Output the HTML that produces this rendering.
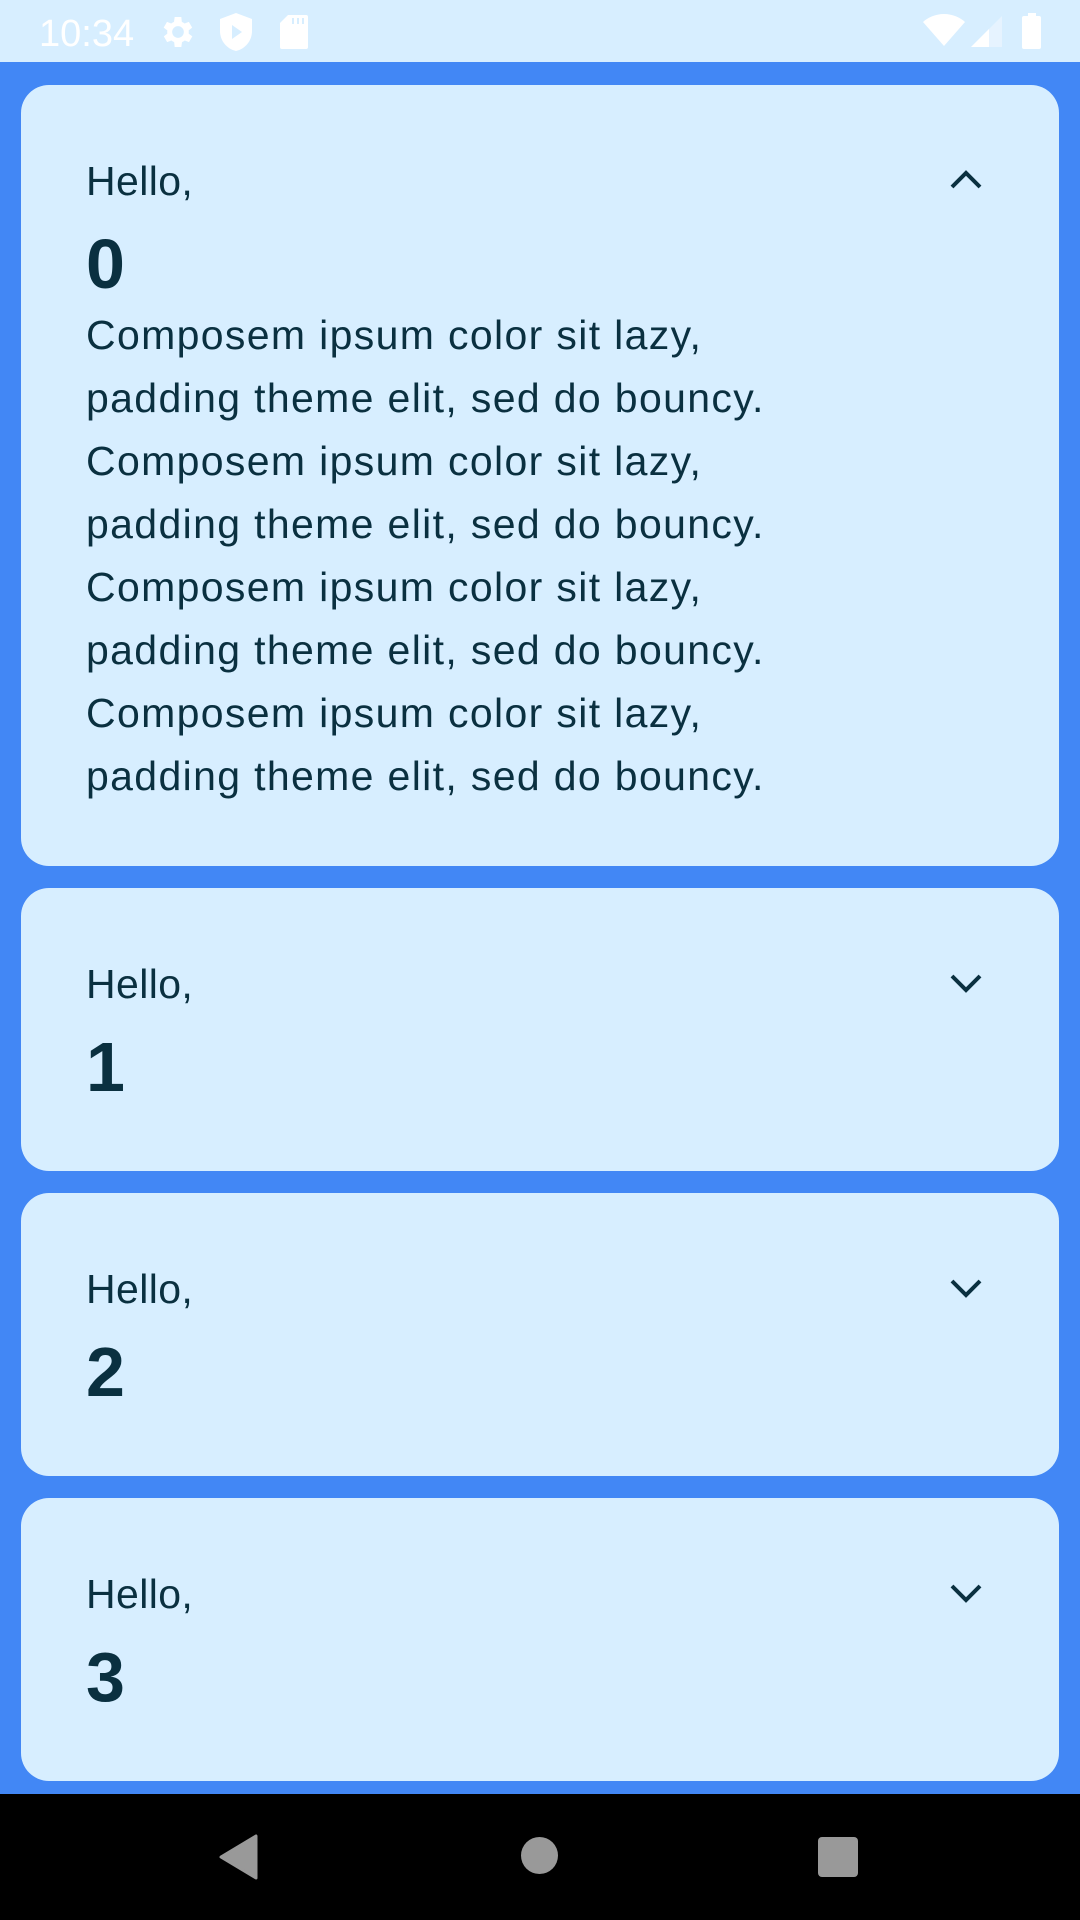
<!DOCTYPE html>
<html><head><meta charset="utf-8"><style>
*{margin:0;padding:0;box-sizing:border-box}
body{width:1080px;height:1920px;background:#4287f5;position:relative;overflow:hidden;font-family:"Liberation Sans",sans-serif;color:#0a3040}
.sb{position:absolute;left:0;top:0;width:1080px;height:62px;background:#d7eeff}
.card{position:absolute;left:21px;width:1038px;background:#d7eeff;border-radius:28px}
.t{position:absolute;left:65px;white-space:nowrap}
.h{font-size:41px;line-height:1;letter-spacing:0.4px}
.d{font-size:70px;font-weight:bold;line-height:1}
.b{font-size:41px;line-height:63px;letter-spacing:1.35px}
.chev{position:absolute;left:929px;width:32px;height:22px}
.nav{position:absolute;left:0;top:1794px;width:1080px;height:126px;background:#000}
</style></head><body>
<div class="sb">
<div style="position:absolute;left:39px;top:13px;font-size:38px;color:#fff">10:34</div>
<svg style="position:absolute;left:158px;top:12px" width="40" height="40" viewBox="0 0 24 24"><path fill="#fff" d="M19.4 13a7.5 7.5 0 0 0 0-2l2.1-1.6-2-3.5-2.5 1a7 7 0 0 0-1.7-1L15 3h-4l-.4 2.9a7 7 0 0 0-1.7 1l-2.5-1-2 3.5L6.6 11a7.5 7.5 0 0 0 0 2l-2.1 1.6 2 3.5 2.5-1a7 7 0 0 0 1.7 1L11 21h4l.4-2.9a7 7 0 0 0 1.7-1l2.5 1 2-3.5zM13 15.5a3.5 3.5 0 1 1 0-7 3.5 3.5 0 0 1 0 7z" transform="translate(-1 0)"/></svg>
<svg style="position:absolute;left:220px;top:13px" width="32" height="38" viewBox="0 0 16 19"><path fill="#fff" d="M8 0L0 3v6c0 5 3.5 9 8 10 4.5-1 8-5 8-10V3z"/><path fill="#d7eeff" d="M6 6v7l5-3.5z"/></svg>
<svg style="position:absolute;left:280px;top:15px" width="28" height="34" viewBox="0 0 14 17"><path fill="#fff" d="M4 0h9a1 1 0 0 1 1 1v15a1 1 0 0 1-1 1H1a1 1 0 0 1-1-1V4z"/><path fill="#d7eeff" d="M6 1.5h1v3H6zM8.5 1.5h1v3h-1zM11 1.5h1v3h-1z"/></svg>
<svg style="position:absolute;left:922px;top:14px" width="44" height="32" viewBox="0 0 44 32"><path fill="#fff" d="M22 0C13 0 5 4 1 8l21 24L43 8C39 4 31 0 22 0z"/></svg>
<svg style="position:absolute;left:970px;top:16px" width="34" height="32" viewBox="0 0 34 32"><path fill="#e6f3ff" d="M32 0v31H1z"/><path fill="#fff" d="M19 13v18H1z"/></svg>
<svg style="position:absolute;left:1021px;top:13px" width="22" height="36" viewBox="0 0 22 36"><rect x="7" y="0" width="8" height="5" fill="#fff"/><rect x="1" y="3" width="19" height="33" rx="2" fill="#fff"/></svg>
</div>

<div class="card" style="top:85px;height:781px">
<div class="t h" style="top:76px">Hello,</div>
<div class="t d" style="top:144px">0</div>
<div class="t b" style="top:219px">Composem ipsum color sit lazy,<br>padding theme elit, sed do bouncy.<br>Composem ipsum color sit lazy,<br>padding theme elit, sed do bouncy.<br>Composem ipsum color sit lazy,<br>padding theme elit, sed do bouncy.<br>Composem ipsum color sit lazy,<br>padding theme elit, sed do bouncy.</div>
<svg class="chev" style="top:84px" viewBox="0 0 32 22"><path d="M2 18L16 4l14 14" fill="none" stroke="#0a3040" stroke-width="4"/></svg>
</div>

<div class="card" style="top:888px;height:283px">
<div class="t h" style="top:76px">Hello,</div>
<div class="t d" style="top:144px">1</div>
<svg class="chev" style="top:84px" viewBox="0 0 32 22"><path d="M2 4l14 14L30 4" fill="none" stroke="#0a3040" stroke-width="4"/></svg>
</div>
<div class="card" style="top:1193px;height:283px">
<div class="t h" style="top:76px">Hello,</div>
<div class="t d" style="top:144px">2</div>
<svg class="chev" style="top:84px" viewBox="0 0 32 22"><path d="M2 4l14 14L30 4" fill="none" stroke="#0a3040" stroke-width="4"/></svg>
</div>
<div class="card" style="top:1498px;height:283px">
<div class="t h" style="top:76px">Hello,</div>
<div class="t d" style="top:144px">3</div>
<svg class="chev" style="top:84px" viewBox="0 0 32 22"><path d="M2 4l14 14L30 4" fill="none" stroke="#0a3040" stroke-width="4"/></svg>
</div>

<div class="nav">
<svg style="position:absolute;left:218px;top:40px" width="42" height="46" viewBox="0 0 42 46"><path d="M38 2v42L3 23z" fill="#999" stroke="#999" stroke-width="3" stroke-linejoin="round"/></svg>
<div style="position:absolute;left:521px;top:43px;width:37px;height:37px;border-radius:50%;background:#999"></div>
<div style="position:absolute;left:818px;top:43px;width:40px;height:40px;border-radius:4px;background:#999"></div>
</div>
</body></html>
